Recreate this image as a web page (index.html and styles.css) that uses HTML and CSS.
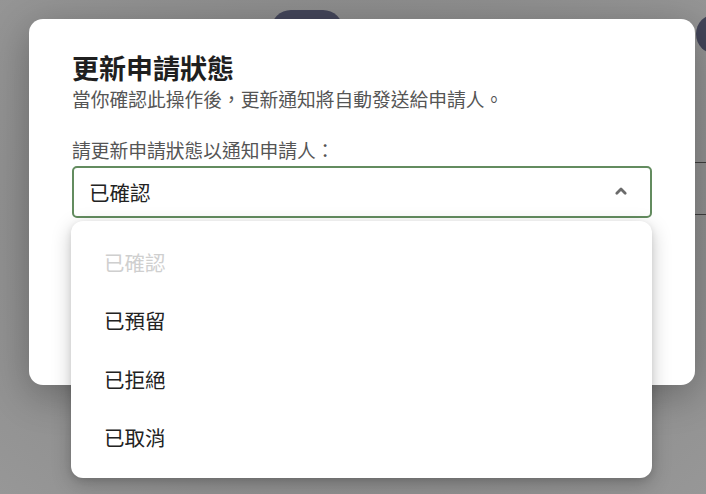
FILE: index.html
```html
<!DOCTYPE html>
<html lang="zh-Hant">
<head>
<meta charset="utf-8">
<title>更新申請狀態</title>
<link rel="stylesheet" href="styles.css">
</head>
<body>
<div class="page">
  <div class="bg-pill"></div>
  <div class="bg-avatar"></div>
  <div class="bg-line bg-line-1"></div>
  <div class="bg-line bg-line-2"></div>
  <div class="backdrop">
    <div class="modal" role="dialog">
      <h1 class="title">更新申請狀態</h1>
      <p class="subtitle">當你確認此操作後，更新通知將自動發送給申請人。</p>
      <label class="label">請更新申請狀態以通知申請人：</label>
      <div class="select-wrap">
        <div class="select">
          <span class="select-value">已確認</span>
          <svg class="chevron" width="14" height="10" viewBox="0 0 14 10"><path d="M2.8 7.3 L7 3.1 L11.2 7.3" fill="none" stroke="#6b6b6b" stroke-width="2.8" stroke-linecap="round" stroke-linejoin="round"/></svg>
        </div>
        <ul class="menu">
          <li class="item disabled">已確認</li>
          <li class="item">已預留</li>
          <li class="item">已拒絕</li>
          <li class="item">已取消</li>
        </ul>
      </div>
      <div class="actions">
        <button class="btn-primary">確認</button>
      </div>
    </div>
  </div>
</div>
</body>
</html>
```
FILE: styles.css
```css
html, body {
  margin: 0;
  padding: 0;
}
body {
  width: 706px;
  height: 494px;
  overflow: hidden;
  background: #909090;
  font-family: "Noto Sans CJK TC", "Noto Sans", sans-serif;
}
.page {
  position: relative;
  width: 706px;
  height: 494px;
  background: radial-gradient(ellipse at 50% 45%, #858585 0%, #8c8c8c 55%, #979797 100%);
}
.bg-pill {
  position: absolute;
  left: 271px;
  top: 10px;
  width: 72px;
  height: 40px;
  border-radius: 20px;
  background: #434559;
}
.bg-avatar {
  position: absolute;
  left: 696px;
  top: 14px;
  width: 40px;
  height: 40px;
  border-radius: 50%;
  background: #434559;
}
.bg-line {
  position: absolute;
  left: 690px;
  width: 16px;
  height: 1px;
  background: #3e3e3e;
}
.bg-line-1 { top: 162px; }
.bg-line-2 { top: 214px; }
.backdrop {
  position: absolute;
  inset: 0;
  padding: 19px 0 0 29px;
  box-sizing: border-box;
}
.modal {
  position: relative;
  width: 666px;
  height: 366px;
  box-sizing: border-box;
  background: #ffffff;
  border-radius: 14px;
  padding: 31px 43px 0 43px;
  box-shadow: 0 10px 38px rgba(0, 0, 0, 0.28);
}
.title {
  margin: 0;
  font-size: 27px;
  line-height: 36px;
  font-weight: 700;
  color: #1f1f1f;
}
.subtitle {
  margin: 0;
  font-size: 18.75px;
  line-height: 26px;
  color: #555555;
}
.label {
  display: block;
  margin-top: 25px;
  font-size: 18.75px;
  line-height: 26px;
  color: #555555;
}
.select-wrap {
  position: relative;
  margin-top: 3px;
}
.select {
  height: 52px;
  box-sizing: border-box;
  border: 2px solid #638c5f;
  border-radius: 5px;
  display: flex;
  align-items: center;
  justify-content: space-between;
  padding: 0 22px 0 15px;
  background: #fff;
}
.select-value {
  font-size: 20.5px;
  color: #222222;
}
.chevron {
  display: block;
  margin-top: -2px;
}
.menu {
  position: absolute;
  z-index: 2;
  left: -1px;
  right: 0;
  top: 55px;
  margin: 0;
  padding: 12px 0 12px;
  list-style: none;
  background: #ffffff;
  border-radius: 12px;
  box-shadow: 0 6px 20px rgba(0, 0, 0, 0.22), 0 2px 6px rgba(0, 0, 0, 0.1);
}
.item {
  height: 58.25px;
  display: flex;
  align-items: center;
  padding-left: 33px;
  font-size: 20.5px;
  color: #222222;
}
.item.disabled {
  color: #cfcfcf;
}
.actions {
  display: flex;
  justify-content: flex-end;
  margin-top: 98px;
}
.btn-primary {
  height: 35px;
  width: 120px;
  border: none;
  border-radius: 6px;
  background: #4a6e46;
  color: #fff;
  font-family: inherit;
  font-size: 16px;
}
```
